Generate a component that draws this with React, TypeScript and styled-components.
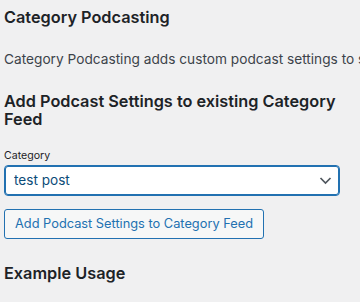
import React from "react";
import styled, { createGlobalStyle } from "styled-components";

const Global = createGlobalStyle`
  html, body { margin: 0; padding: 0; }
  body {
    background: #f0f0f1;
    color: #3c434a;
    font-family: Inter, "Noto Sans", "Liberation Sans", sans-serif;
    font-size: 13.4px;
    overflow: hidden;
  }
`;

const Page = styled.div`
  width: 360px;
  height: 302px;
  overflow: hidden;
  padding: 8px 4px 0;
  box-sizing: border-box;
`;

const Heading = styled.h2<{ $top: number }>`
  color: #1d2327;
  font-size: 16.3px;
  font-weight: 600;
  line-height: 18px;
  margin: ${(p) => p.$top}px 0 0;
  width: 345px;
`;

const Intro = styled.p`
  margin: 23.5px 0 0;
  font-size: 13.7px;
  line-height: 19px;
  white-space: nowrap;
  color: #3c434a;
`;

const Label = styled.label`
  display: block;
  font-size: 10.6px;
  line-height: 15px;
  color: #1d2327;
  margin: 20px 0 0;
`;

const SelectWrap = styled.div`
  position: relative;
  width: 336px;
  margin-top: 2.4px;
`;

const Select = styled.select`
  display: block;
  appearance: none;
  -webkit-appearance: none;
  width: 100%;
  height: 31px;
  box-sizing: border-box;
  border: 1px solid #2271b1;
  box-shadow: 0 0 0 1px #2271b1 inset;
  border-radius: 4px;
  background: #fff;
  color: #0a4b78;
  font-family: inherit;
  font-size: 13.6px;
  padding: 0 24px 0 9px;
  margin: 0;
  outline: none;
`;

const Chevron = styled.svg`
  position: absolute;
  left: 315px;
  top: 11px;
  width: 13px;
  height: 9px;
  pointer-events: none;
`;

const Button = styled.button`
  display: block;
  width: fit-content;
  margin: 13px 0 0;
  height: 30px;
  box-sizing: border-box;
  padding: 0 10px;
  border: 1px solid #2271b1;
  border-radius: 3px;
  background: #f6f7f7;
  color: #2271b1;
  font-family: inherit;
  font-size: 12.8px;
  cursor: pointer;
`;

export default function App() {
  return (
    <>
      <Global />
      <Page>
        <Heading $top={0}>Category Podcasting</Heading>
        <Intro>Category Podcasting adds custom podcast settings to specific category feeds.</Intro>
        <Heading $top={23}>Add Podcast Settings to existing Category Feed</Heading>
        <Label htmlFor="cat">Category</Label>
        <SelectWrap>
          <Select id="cat" defaultValue="test">
            <option value="test">test post</option>
          </Select>
          <Chevron viewBox="0 0 13 9">
            <path d="M1.5 2 L6.5 7 L11.5 2" fill="none" stroke="#50575e" strokeWidth="1.7" />
          </Chevron>
        </SelectWrap>
        <Button type="button">Add Podcast Settings to Category Feed</Button>
        <Heading $top={25}>Example Usage</Heading>
      </Page>
    </>
  );
}
